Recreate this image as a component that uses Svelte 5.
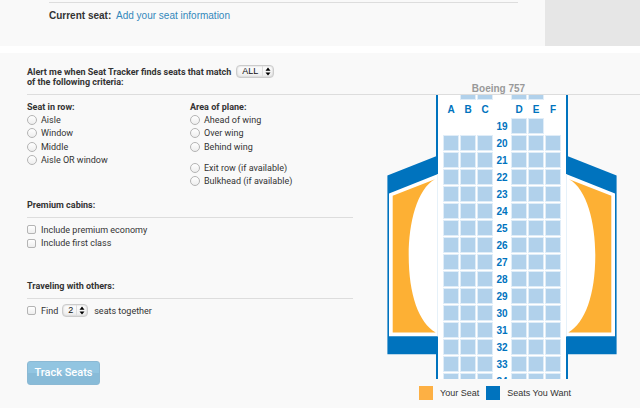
<script lang="ts">
	type Option = { label: string; value: string };

	const rowOptions: Option[] = [
		{ label: 'Aisle', value: 'aisle' },
		{ label: 'Window', value: 'window' },
		{ label: 'Middle', value: 'middle' },
		{ label: 'Aisle OR window', value: 'aisle-window' }
	];

	const areaOptions: Option[] = [
		{ label: 'Ahead of wing', value: 'ahead' },
		{ label: 'Over wing', value: 'over' },
		{ label: 'Behind wing', value: 'behind' }
	];

	const specialOptions: Option[] = [
		{ label: 'Exit row (if available)', value: 'exit' },
		{ label: 'Bulkhead (if available)', value: 'bulkhead' }
	];

	const letters = ['A', 'B', 'C', '', 'D', 'E', 'F'];

	// which letters have no seat, everything else is a full row
	const missing: Record<number, string> = { 18: 'AF', 19: 'ABCF' };
	const rows = Array.from({ length: 17 }, (_, i) => 18 + i);

	const hasSeat = (row: number, letter: string) => !(missing[row] ?? '').includes(letter);

	let match = $state('ALL');
	let seatRow = $state('');
	let area = $state('');
	let premium = $state(false);
	let first = $state(false);
	let together = $state(false);
	let count = $state('2');
</script>

{#snippet arrows()}
	<svg class="arrows" viewBox="0 0 12 13" aria-hidden="true">
		<path class="split" d="M0.5 1V12" />
		<path d="M3.5 5.8L6 2.6L8.5 5.8Z M3.5 7.4L6 10.6L8.5 7.4Z" />
	</svg>
{/snippet}

{#snippet wing(side: string)}
	<svg class="wing {side}" viewBox="0 0 51 284" aria-hidden="true">
		<path class="blue" d="M49 0H51V284H49Z" />
		<path class="blue" d="M0.4 80.4L51 60.5V259.3H0.4Z" />
		<path class="white" d="M2 98.5L51 79V241.2H2Z" />
		<path class="pale" d="M50 79.4H51V241.2H50Z" />
		<path
			class="orange"
			d="M5.7 100.8L48 84.3C30 94 21.7 128 21.7 160C21.7 200 32 228 48.7 237.4H5.7Z"
		/>
	</svg>
{/snippet}

<section class="current">
	<div class="seat-info">
		<strong>Current seat:</strong>
		<a href="#seat">Add your seat information</a>
	</div>
	<div class="aside"></div>
</section>

<section class="tracker">
	<header>
		<div class="criteria">
			<label for="match">
				Alert me when Seat Tracker finds seats that match<br />of the following criteria:
			</label>
			<span class="select">
				<select id="match" bind:value={match}>
					<option>ALL</option>
					<option>ANY</option>
				</select>
				{@render arrows()}
			</span>
		</div>
		<h2>Boeing 757</h2>
	</header>

	<div class="body">
		<form onsubmit={(e) => e.preventDefault()}>
			<div class="columns">
				<div>
					<h3>Seat in row:</h3>
					<div class="options four">
						{#each rowOptions as option}
							<label>
								<input type="radio" name="row" value={option.value} bind:group={seatRow} />
								{option.label}
							</label>
						{/each}
					</div>
				</div>
				<div>
					<h3>Area of plane:</h3>
					<div class="options three">
						{#each areaOptions as option}
							<label>
								<input type="radio" name="area" value={option.value} bind:group={area} />
								{option.label}
							</label>
						{/each}
					</div>
					<div class="options two special">
						{#each specialOptions as option}
							<label>
								<input type="radio" name="area" value={option.value} bind:group={area} />
								{option.label}
							</label>
						{/each}
					</div>
				</div>
			</div>

			<h3 class="ruled">Premium cabins:</h3>
			<div class="options two">
				<label><input type="checkbox" bind:checked={premium} /> Include premium economy</label>
				<label><input type="checkbox" bind:checked={first} /> Include first class</label>
			</div>

			<h3 class="ruled others">Traveling with others:</h3>
			<div class="find">
				<label><input type="checkbox" bind:checked={together} /> Find</label>
				<span class="select small">
					<select id="count" bind:value={count}>
						<option>2</option>
						<option>3</option>
						<option>4</option>
					</select>
					{@render arrows()}
				</span>
				<label for="count">seats together</label>
			</div>

			<button type="submit">Track Seats</button>
		</form>

		<div class="plane">
			<div class="map">
				{@render wing('left')}
				<div class="cabin">
					{#each rows as row}
						{#each letters as letter}
							{#if !letter}
								<b>{row > 18 ? row : ''}</b>
							{:else if hasSeat(row, letter)}
								<i class="seat"></i>
							{:else}
								<i></i>
							{/if}
						{/each}
						{#if row === 18}
							{#each letters as letter}
								<b>{letter}</b>
							{/each}
						{/if}
					{/each}
				</div>
				{@render wing('right')}
			</div>
			<div class="legend">
				<span class="swatch yours"></span>
				<span>Your Seat</span>
				<span class="swatch wanted"></span>
				<span>Seats You Want</span>
			</div>
		</div>
	</div>
</section>

<style>
	:global(body) {
		margin: 0;
		background: #fff;
		color: #333;
		font: 9px/12px Roboto, 'Liberation Sans', Arial, sans-serif;
	}

	h2,
	h3 {
		margin: 0;
		font-size: 9px;
		line-height: 12px;
	}

	.current {
		display: flex;
		justify-content: space-between;
		gap: 27px;
		height: 46px;
		margin-bottom: 7px;
		padding-left: 49px;
		background: #f9f9f9;
		font-family: 'Liberation Sans', Arial, sans-serif;
		font-size: 10px;
	}

	.seat-info {
		flex: 1;
		padding-top: 2px;
	}

	.seat-info::before {
		content: '';
		display: block;
		margin-bottom: 7px;
		border-top: 1px solid #ddd;
	}

	.seat-info a {
		margin-left: 2px;
		color: #3388bb;
		text-decoration: none;
	}

	.aside {
		width: 95px;
		background: #e6e6e6;
	}

	.tracker {
		padding-bottom: 8px;
		background: #f9f9f9;
	}

	header {
		display: flex;
		justify-content: space-between;
		align-items: flex-end;
		margin-left: 27px;
		padding: 12px 23px 0 0;
		border-bottom: 1px solid #ddd;
	}

	.criteria {
		display: flex;
		gap: 5px;
		padding-bottom: 7px;
		font-weight: bold;
		line-height: 10px;
	}

	.criteria label {
		padding-top: 2px;
	}

	header h2 {
		width: 230px;
		padding-right: 7px;
		box-sizing: border-box;
		color: #999;
		font-family: 'Liberation Sans', Arial, sans-serif;
		font-size: 10px;
		line-height: 11px;
		text-align: center;
	}

	.select {
		display: inline-grid;
		align-items: center;
		width: 38px;
		height: 13px;
	}

	.select.small {
		width: 26px;
	}

	.select > :global(*) {
		grid-area: 1 / 1;
	}

	select {
		width: 100%;
		height: 13px;
		padding: 0 0 0 5px;
		appearance: none;
		border: 1px solid #ccc;
		border-radius: 4px;
		background: linear-gradient(#fff, #ececec);
		box-shadow: inset 0 0 2px #bbb;
		color: #111;
		font: 9px/11px 'Liberation Sans', Arial, sans-serif;
	}

	.arrows {
		justify-self: end;
		width: 12px;
		height: 13px;
		pointer-events: none;
	}

	.split {
		stroke: #ddd;
	}

	.body {
		display: flex;
		gap: 34px;
		padding: 0 23px 0 27px;
	}

	form {
		flex: 1;
		padding-top: 6px;
	}

	.columns {
		display: grid;
		grid-template-columns: 1fr 1fr;
		margin-bottom: 11px;
	}

	.options {
		display: grid;
		grid-auto-rows: 1fr;
	}

	.two {
		height: 27px;
	}

	.three {
		height: 41px;
	}

	.four {
		height: 54px;
	}

	.special {
		margin-top: 7px;
	}

	.options label,
	.find,
	.find label {
		display: flex;
		align-items: center;
		gap: 4px;
	}

	input {
		width: 10px;
		height: 10px;
		margin: 0;
		box-sizing: border-box;
		appearance: none;
		border: 1px solid #b4b4b4;
		border-radius: 50%;
		background: linear-gradient(#fff, #eee);
	}

	input[type='checkbox'] {
		width: 9px;
		height: 9px;
		margin-right: 1px;
		border-radius: 2px;
	}

	input:checked {
		background: #3388bb;
	}

	.ruled {
		margin-bottom: 5px;
		padding-bottom: 6px;
		border-bottom: 1px solid #ddd;
	}

	.others {
		margin-top: 30px;
	}

	.find .select {
		margin-right: 2px;
	}

	button {
		display: block;
		width: 73px;
		height: 24px;
		margin-top: 44px;
		padding: 0;
		border: 1px solid #8bb9d4;
		border-radius: 3px;
		background: linear-gradient(#92c5e1 50%, #88bbd8 50%);
		color: #fff;
		font: 500 11px/22px Roboto, 'Liberation Sans', Arial, sans-serif;
	}

	.map {
		display: flex;
		height: 284px;
		overflow: hidden;
	}

	.wing {
		width: 51px;
		height: 284px;
	}

	.right {
		transform: scaleX(-1);
	}

	.blue {
		fill: #0073be;
	}

	.white {
		fill: #fff;
	}

	.pale {
		fill: #e6f1f9;
	}

	.orange {
		fill: #fdb034;
	}

	.cabin {
		display: grid;
		grid-template-columns: repeat(7, 14px);
		grid-auto-rows: 14px;
		gap: 3px;
		margin-top: -10px;
		padding: 0 6px;
		background: #fff;
	}

	.cabin b {
		color: #0073be;
		font-family: 'Liberation Sans', Arial, sans-serif;
		font-size: 10px;
		line-height: 15px;
		text-align: center;
	}

	.seat {
		background: #b1d1eb;
		box-shadow: 0 0 0 1px #e0edf8;
	}

	.legend {
		display: flex;
		align-items: center;
		gap: 7px;
		padding: 7px 0 0 32px;
		font-family: 'Liberation Sans', Arial, sans-serif;
	}

	.swatch {
		width: 14px;
		height: 14px;
	}

	.yours {
		background: #fdb044;
	}

	.wanted {
		background: #0073be;
	}
</style>
